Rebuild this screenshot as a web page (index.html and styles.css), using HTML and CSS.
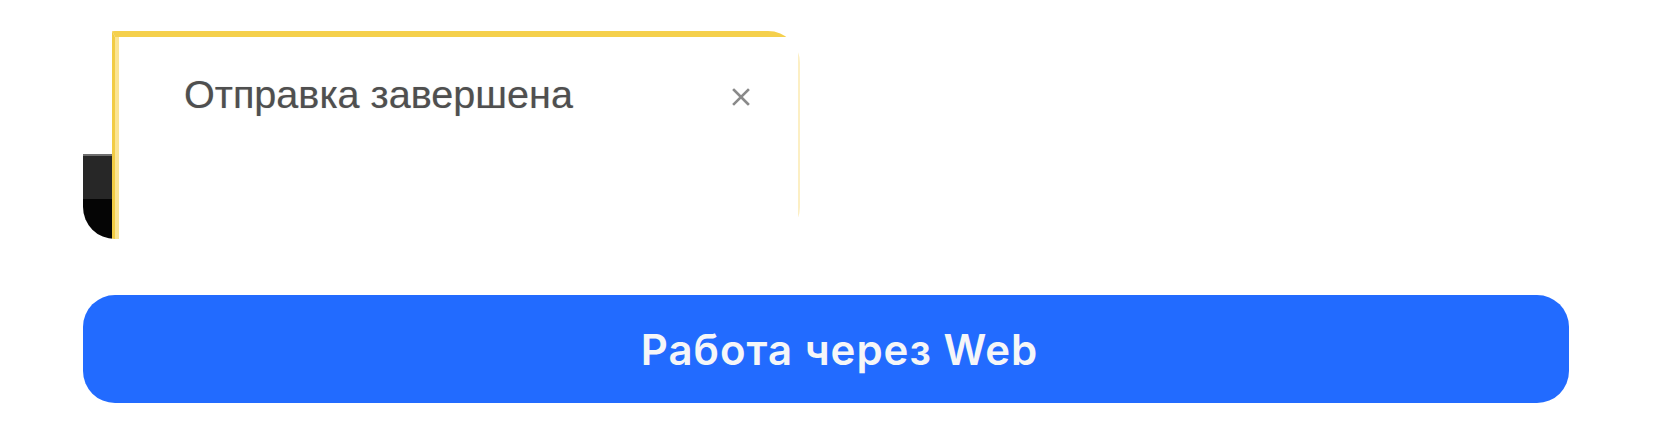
FILE: index.html
```html
<!DOCTYPE html>
<html lang="ru">
<head>
  <meta charset="UTF-8">
  <meta name="viewport" content="width=device-width, initial-scale=1.0">
  <title>Работа через Web</title>
  <link rel="stylesheet" href="styles.css">
</head>
<body>
  <div class="page">
    <div class="shot">
      <div class="strip">
        <div class="strip-space"></div>
        <div class="strip-gray"></div>
        <div class="strip-black"></div>
      </div>
      <div class="dialog">
        <div class="panel">
          <div class="panel-head">
            <span class="panel-title">Отправка завершена</span>
            <svg class="close" width="18" height="18" viewBox="0 0 18 18">
              <path d="M2 2 L16 16 M16 2 L2 16" stroke="#8a8a8a" stroke-width="2.6" stroke-linecap="square"/>
            </svg>
          </div>
        </div>
        <div class="edge"></div>
      </div>
    </div>
    <button class="web-btn">Работа через Web</button>
  </div>
</body>
</html>
```

FILE: styles.css
```css
body {
  margin: 0;
  background: #fff;
}

.page {
  padding: 31px 84px 0 83px;
  display: flex;
  flex-direction: column;
  align-items: flex-start;
}

.shot {
  width: 717px;
  height: 208px;
  border-radius: 32px;
  overflow: hidden;
  display: flex;
  background: #fff;
}

.strip {
  width: 29px;
  display: flex;
  flex-direction: column;
}

.strip-space {
  height: 123px;
  background: #fff;
}

.strip-gray {
  height: 43px;
  background: #272727;
  border-top: 2px solid #6e6e6e;
}

.strip-black {
  flex: 1;
  background: #050505;
}

.dialog {
  flex: 1;
  display: flex;
}

.panel {
  flex: 1;
  border-top: 6px solid #f5d04c;
  border-left: 3px solid #f2cc44;
  border-top-right-radius: 4px;
  box-shadow: inset 4px 0 0 #fbe492;
  padding: 35px 45px 0 69px;
}

.panel-head {
  display: flex;
  align-items: center;
  justify-content: space-between;
}

.panel-title {
  font-family: "Liberation Sans", Arial, sans-serif;
  font-size: 39.6px;
  color: #4f4f4f;
  text-shadow: 0 0 1px rgba(80, 80, 80, 0.4);
}

.close {
  margin-top: 4px;
}

.edge {
  width: 2px;
  margin: 12px 0 0 3px;
  height: 174px;
  background: #fcefc4;
}

.web-btn {
  margin-top: 56px;
  width: 1486px;
  height: 108px;
  border: none;
  border-radius: 32px;
  background: #226bff;
  color: #f5f6f8;
  font-family: Inter, "Noto Sans", sans-serif;
  font-size: 42px;
  font-weight: 600;
  letter-spacing: 1px;
  padding: 0 0 0 27px;
  cursor: pointer;
}
```
